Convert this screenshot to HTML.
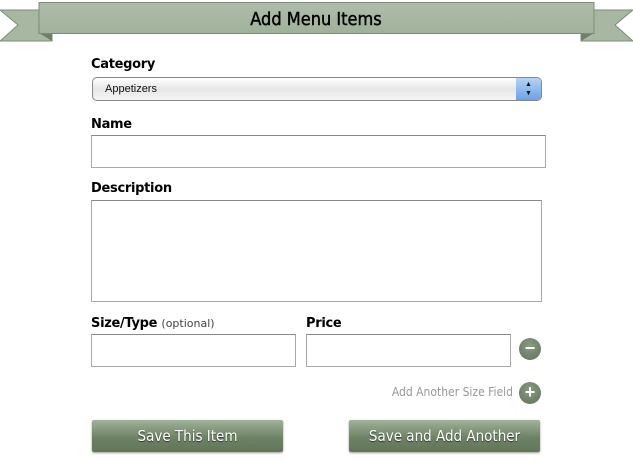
<!DOCTYPE html>
<html><head><style>
body{margin:0;width:633px;height:462px;background:#fff;font-family:"Liberation Sans",sans-serif;position:relative;overflow:hidden}
.a{position:absolute}
.lbl{position:absolute;font-weight:bold;font-size:13px;color:#000;font-family:"DejaVu Sans","Liberation Sans",sans-serif;letter-spacing:-0.3px}
.inp{position:absolute;border:1px solid #aaa;border-top-color:#888;background:#fff;box-sizing:border-box}
.btn{position:absolute;height:32px;width:191px;border-radius:2px;background:linear-gradient(#a0b19a,#6e8366 55%,#617559);box-shadow:0 1px 2px rgba(0,0,0,.4);color:#fff;font-size:15px;text-align:center;line-height:33px;text-shadow:0 1px 1px rgba(0,0,0,.6);font-family:"DejaVu Sans Condensed","Liberation Sans",sans-serif}
.circ{position:absolute;width:22px;height:22px;border-radius:50%;background:radial-gradient(circle at 50% 35%,#8a9b83,#5f7258);color:#fff;text-align:center;line-height:21px;font-weight:bold;font-size:18px}
</style></head><body>
<svg class="a" style="left:0;top:0" width="633" height="50">
<polygon points="0,10 52,10 52,41 0,41 18,25" fill="#a7b7a1" stroke="#7c8c76"/>
<polygon points="633,10 581,10 581,41 633,41 615,25" fill="#a7b7a1" stroke="#7c8c76"/>
<polygon points="39,33 52,33 52,41" fill="#6f7f69"/>
<polygon points="594,33 581,33 581,41" fill="#6f7f69"/>
<defs><linearGradient id="g" x1="0" y1="0" x2="0" y2="1"><stop offset="0" stop-color="#aebdaa"/><stop offset="1" stop-color="#a0b19a"/></linearGradient></defs>
<rect x="39" y="2.5" width="555" height="31" fill="url(#g)" stroke="#7c8c76"/>
<text x="316" y="25" text-anchor="middle" font-family="DejaVu Sans Condensed, Liberation Sans, sans-serif" font-size="18" fill="#000" stroke="#000" stroke-width="0.4">Add Menu Items</text>
</svg>
<div class="lbl" style="left:91px;top:57px">Category</div>
<div class="a" style="left:92px;top:77px;width:450px;height:24px;box-sizing:border-box;border:1px solid #888;border-radius:5px;background:linear-gradient(#fff,#e6e6e6 50%,#f4f4f4);font-size:11px;line-height:22px;padding-left:12px;color:#111">Appetizers
<div class="a" style="right:0;top:0;width:25px;height:22px;border-radius:0 4px 4px 0;background:linear-gradient(#b5d3f5,#6aa2e6);font-size:7px;line-height:9px;text-align:center;padding-top:2px;box-sizing:border-box">▲<br>▼</div></div>
<div class="lbl" style="left:91px;top:117px">Name</div>
<div class="inp" style="left:91px;top:135px;width:455px;height:33px"></div>
<div class="lbl" style="left:91px;top:181px">Description</div>
<div class="inp" style="left:91px;top:200px;width:451px;height:102px"></div>
<div class="lbl" style="left:91px;top:316px">Size/Type <span style="font-weight:normal;font-size:11px;color:#444;letter-spacing:0">(optional)</span></div>
<div class="lbl" style="left:306px;top:316px">Price</div>
<div class="inp" style="left:91px;top:334px;width:205px;height:33px"></div>
<div class="inp" style="left:306px;top:334px;width:205px;height:33px"></div>
<div class="circ" style="left:519px;top:338px">−</div>
<div class="a" style="left:300px;top:385px;width:213px;text-align:right;font-size:12px;color:#999;font-family:'DejaVu Sans Condensed','Liberation Sans',sans-serif">Add Another Size Field</div>
<div class="circ" style="left:519px;top:382px">+</div>
<div class="btn" style="left:92px;top:420px">Save This Item</div>
<div class="btn" style="left:349px;top:420px">Save and Add Another</div>
</body></html>
